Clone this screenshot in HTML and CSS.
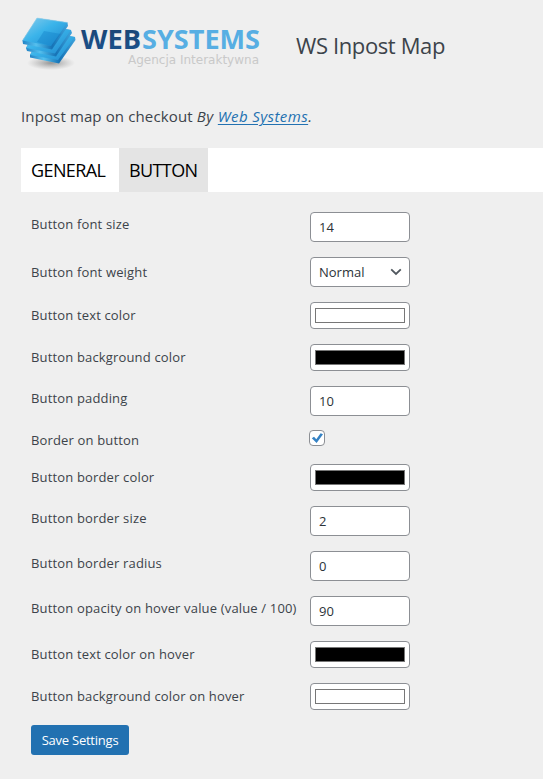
FILE: index.html
```html
<!DOCTYPE html>
<html lang="en">
<head>
<meta charset="utf-8">
<title>WS Inpost Map</title>
<link rel="stylesheet" href="styles.css">
</head>
<body>
<header class="header">
  <svg class="logo" width="240" height="64" viewBox="20 16 240 64" role="img" aria-label="Web Systems">
    <defs>
      <linearGradient id="top" x1="0" y1="0" x2="1" y2="1"><stop offset="0" stop-color="#8ccdeb"/><stop offset=".45" stop-color="#3bb4ea"/><stop offset="1" stop-color="#1c86cc"/></linearGradient>
      <linearGradient id="side" x1="0" y1="0" x2="1" y2="0"><stop offset="0" stop-color="#2384c6"/><stop offset=".3" stop-color="#55c0ee"/><stop offset=".65" stop-color="#1673b6"/><stop offset="1" stop-color="#3fa3dc"/></linearGradient>
      <linearGradient id="web" x1="0" y1="0" x2="0" y2="1"><stop offset="0" stop-color="#1a426f"/><stop offset="1" stop-color="#1b5592"/></linearGradient>
      <radialGradient id="shadow"><stop offset="0" stop-color="#777" stop-opacity=".75"/><stop offset="1" stop-color="#999" stop-opacity="0"/></radialGradient>
    </defs>
    <ellipse cx="51" cy="63" rx="24" ry="7" fill="url(#shadow)"/>
    <path d="M30 55 43 32 75 37 75.500 40 59 63.500 30 57.500Z" fill="url(#side)"/>
    <path d="M30 55 43 32 75 37 58 60Z" fill="url(#top)"/>
    <path d="M26 48 39 25 71 30 72 33 56 56.500 27 51Z" fill="url(#side)"/>
    <path d="M26 48 39 25 71 30 55 53.500Z" fill="url(#top)"/>
    <path d="M22.500 40.500 37 18 67.500 22.500 68 26 52 49.500 23 44Z" fill="url(#side)"/>
    <path d="M22.500 40.500 37 18 67.500 22.500 51 46Z" fill="url(#top)"/>
    <path d="M37 42 44 31 61 34 51 46Z" fill="#0b78c2" opacity=".35"/>
    <path d="M22.500 40.500 37 18 67.500 22.500" fill="none" stroke="#a5d5ea" stroke-width=".6"/>
    <text class="logo-web" x="81" y="49" textLength="60" lengthAdjust="spacingAndGlyphs" fill="url(#web)">WEB</text>
    <text class="logo-systems" x="142" y="49" textLength="118" lengthAdjust="spacingAndGlyphs">SYSTEMS</text>
    <text class="logo-tagline" x="128" y="64" textLength="131" lengthAdjust="spacingAndGlyphs">Agencja Interaktywna</text>
  </svg>
  <h1 class="title">WS Inpost Map</h1>
</header>
<p class="intro">Inpost map on checkout <em>By <a href="#">Web Systems</a>.</em></p>
<nav class="tabs"><a class="tab general" href="#">GENERAL</a><a class="tab active" href="#">BUTTON</a></nav>
<form class="settings">
  <div class="row number"><label>Button font size</label><input class="field" value="14"></div>
  <div class="row select"><label>Button font weight</label><div class="field dropdown"><span>Normal</span><svg width="12" height="8" viewBox="0 0 12 8"><path d="M1.200 1.300 6 6 10.800 1.300" fill="none" stroke="#50575e" stroke-width="1.800"/></svg></div></div>
  <div class="row color"><label>Button text color</label><div class="field picker"><span class="swatch white"></span></div></div>
  <div class="row color"><label>Button background color</label><div class="field picker"><span class="swatch"></span></div></div>
  <div class="row number"><label>Button padding</label><input class="field" value="10"></div>
  <div class="row check"><label>Border on button</label><span class="checkbox"><svg width="14" height="14" viewBox="0 0 14 14"><path d="M1.800 7.300 4 5.800 6.300 8.300 10.600 2.300 13 3.300 6.600 12Z" fill="#3582c4"/></svg></span></div>
  <div class="row color"><label>Button border color</label><div class="field picker"><span class="swatch"></span></div></div>
  <div class="row number"><label>Button border size</label><input class="field" value="2"></div>
  <div class="row number"><label>Button border radius</label><input class="field" value="0"></div>
  <div class="row number"><label>Button opacity on hover value (value / 100)</label><input class="field" value="90"></div>
  <div class="row color"><label>Button text color on hover</label><div class="field picker"><span class="swatch"></span></div></div>
  <div class="row color"><label>Button background color on hover</label><div class="field picker"><span class="swatch white"></span></div></div>
  <button class="save" type="button">Save Settings</button>
</form>
</body>
</html>
```
FILE: styles.css
```css
* { box-sizing: border-box; }
body {
  margin: 0;
  height: 779px;
  padding: 16px 0 0 21px;
  overflow: hidden;
  background: #efefef;
  color: #3c434a;
  font: 13px/20px "Open Sans", "Noto Sans", sans-serif;
}
.header { display: flex; height: 64px; margin-left: -1px; }
.logo { flex: none; }
.logo-web { font: 700 26.500px "Open Sans", sans-serif; }
.logo-systems { font: 700 26.500px "Open Sans", sans-serif; fill: #57aee3; }
.logo-tagline { font: 12px "DejaVu Sans", sans-serif; fill: #c9c9c9; }
.title { margin: 13px 0 0 36px; font-size: 22px; line-height: 32px; font-weight: 400; letter-spacing: -.38px; white-space: nowrap; }
.intro { height: 24px; margin: 24px 0 20px; font-size: 15px; line-height: 24px; letter-spacing: .13px; white-space: nowrap; }
.intro em { letter-spacing: .42px; }
.intro a { color: #2271b1; text-underline-offset: 2px; text-decoration-thickness: 1px; }
.tabs { display: flex; height: 44px; background: #fff; }
.tab { width: 89px; padding-left: 10px; color: #000; font-size: 18px; line-height: 44px; letter-spacing: -.6px; text-decoration: none; white-space: nowrap; }
.tab.general { width: 98px; }
.tab.active { background: #e4e4e4; }
.settings { display: flex; flex-direction: column; gap: 15px; padding: 20px 0 0 10px; }
.row { display: grid; grid-template-columns: 279px 100px; align-items: center; height: 30px; }
.row label { line-height: 20px; letter-spacing: .16px; white-space: nowrap; }
.row.number label { align-self: start; margin-top: 2px; }
.row.color { height: 27px; }
.row.check { height: 18px; }
.row.color label { margin-top: -2px; }
.row.check label { align-self: start; margin-top: -1px; }
.field { width: 100px; height: 30px; padding: 0 8px; border: 1px solid #8c8f94; border-radius: 4px; background: #fff; color: #2c3338; font: 13px/28px "Open Sans", sans-serif; }
.dropdown { display: flex; align-items: center; justify-content: space-between; padding-right: 7px; }
.picker { height: 27px; padding: 5px 4px; }
.swatch { display: block; height: 15px; border: 1px solid #777; background: #000; }
.swatch.white { background: #fff; }
.checkbox { align-self: start; width: 16px; height: 16px; margin: -1px 0 0 -1px; border: 1px solid #8c8f94; border-radius: 4px; background: #fff; }
.checkbox svg { display: block; }
.save { width: 98px; height: 30px; padding: 0; border: 0; border-radius: 3px; background: #2271b1; color: #fff; font: 13px/30px "Open Sans", sans-serif; letter-spacing: -.23px; white-space: nowrap; }
```
